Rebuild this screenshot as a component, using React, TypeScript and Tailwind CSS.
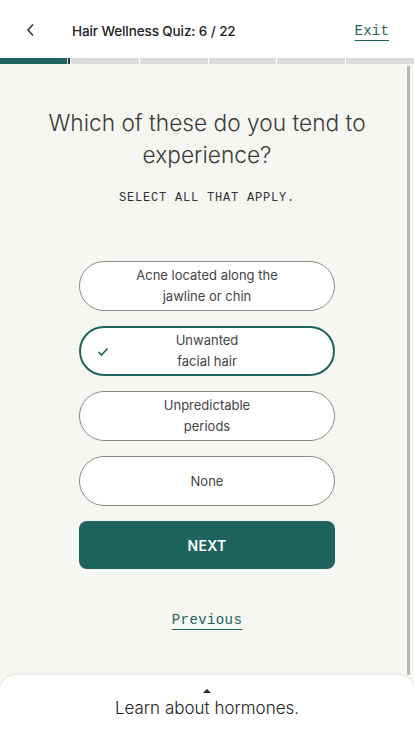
import React, { useState } from "react"

const opcoes = [
  { id: "acne", linhas: ["Acne located along the", "jawline or chin"] },
  { id: "hair", linhas: ["Unwanted", "facial hair"] },
  { id: "periods", linhas: ["Unpredictable", "periods"] },
  { id: "none", linhas: ["None"] },
]

const sans = "font-['Inter','Liberation_Sans',sans-serif]"
const mono = "font-['Liberation_Mono','DejaVu_Sans_Mono',monospace]"

const App = () => {
  const [selecionadas, setSelecionadas] = useState<string[]>(["hair"])

  const alternar = (id: string) => {
    setSelecionadas((atual) => (atual.includes(id) ? atual.filter((x) => x !== id) : [...atual, id]))
  }

  return (
    <div className={`w-[414px] h-[736px] overflow-hidden bg-[#f6f6f2] flex flex-col ${sans}`}>
      {/* topo */}
      <header className="h-[58px] bg-white flex items-center pt-[5px] pl-[26px] pr-[25px]">
        <svg width="9" height="14" viewBox="0 0 9 14" className="mt-[-3px]">
          <path d="M7 1.5 L2 7 L7 12.5" fill="none" stroke="#333" strokeWidth="1.5" />
        </svg>
        <span className="ml-[37px] text-[13.5px] font-medium text-[#222] tracking-[-0.1px]">Hair Wellness Quiz: 6 / 22</span>
        <span className={`ml-auto text-[14px] tracking-[0.2px] text-[#1e635e] underline underline-offset-[5px] decoration-[1px] ${mono}`}>Exit</span>
      </header>

      {/* progresso */}
      <div className="h-[6px] flex gap-[1px] bg-white">
        <div className="flex-1 bg-[#dcdcdc] flex">
          <div className="w-[67px] bg-[#1e635e]" />
          <div className="w-[2px] ml-[1px] bg-[#333]" />
        </div>
        <div className="flex-1 bg-[#dcdcdc]" />
        <div className="flex-1 bg-[#dcdcdc]" />
        <div className="flex-1 bg-[#dcdcdc]" />
        <div className="flex-1 bg-[#dcdcdc]" />
        <div className="flex-1 bg-[#dcdcdc]" />
      </div>

      {/* conteúdo */}
      <main className="relative flex-1 flex flex-col items-center">
        <h1 className="mt-[43px] w-[330px] text-center text-[22.7px] leading-[32px] font-light text-[#3a3a3a]">
          Which of these do you tend to experience?
        </h1>
        <p className={`mt-[18px] text-[12px] tracking-[0.8px] text-[#333] ${mono}`}>SELECT ALL THAT APPLY.</p>

        <div className="mt-[54px] w-[256px] flex flex-col gap-[15px]">
          {opcoes.map((o) => {
            const ativa = selecionadas.includes(o.id)
            return (
              <button
                key={o.id}
                onClick={() => alternar(o.id)}
                className={`relative h-[50px] rounded-full bg-white flex flex-col items-center justify-center text-[13px] leading-[21px] text-[#444] ${
                  ativa ? "border-2 border-[#1e635e]" : "border border-[#8a8a8a]"
                }`}
              >
                {ativa && (
                  <svg width="12" height="10" viewBox="0 0 12 10" className="absolute left-[16px] top-[19px]">
                    <path d="M1.5 5 L4.5 8 L10.5 1.5" fill="none" stroke="#1e635e" strokeWidth="1.6" />
                  </svg>
                )}
                {o.linhas.map((l) => (
                  <span key={l}>{l}</span>
                ))}
              </button>
            )
          })}
        </div>

        <button className="mt-[15px] w-[256px] h-[48px] rounded-[8px] bg-[#1e635e] text-white text-[14px] font-semibold tracking-[0.3px]">
          NEXT
        </button>

        <span className={`mt-[41px] text-[14px] tracking-[0.4px] text-[#1e635e] underline underline-offset-[5px] decoration-[1px] ${mono}`}>Previous</span>

        {/* barra de rolagem */}
        <div className="absolute right-[4px] top-[2px] bottom-0 w-[3px] bg-[#b8b8b8]" />
      </main>

      {/* painel inferior */}
      <div className="h-[61px] bg-white rounded-t-[16px] shadow-[0_-1px_3px_rgba(0,0,0,0.08)] flex flex-col items-center">
        <div className="mt-[14px] w-0 h-0 border-l-[4px] border-r-[4px] border-b-[4px] border-l-transparent border-r-transparent border-b-[#222]" />
        <span className="mt-[3px] text-[17px] font-light text-[#222]">Learn about hormones.</span>
      </div>
    </div>
  )
}

export default App
